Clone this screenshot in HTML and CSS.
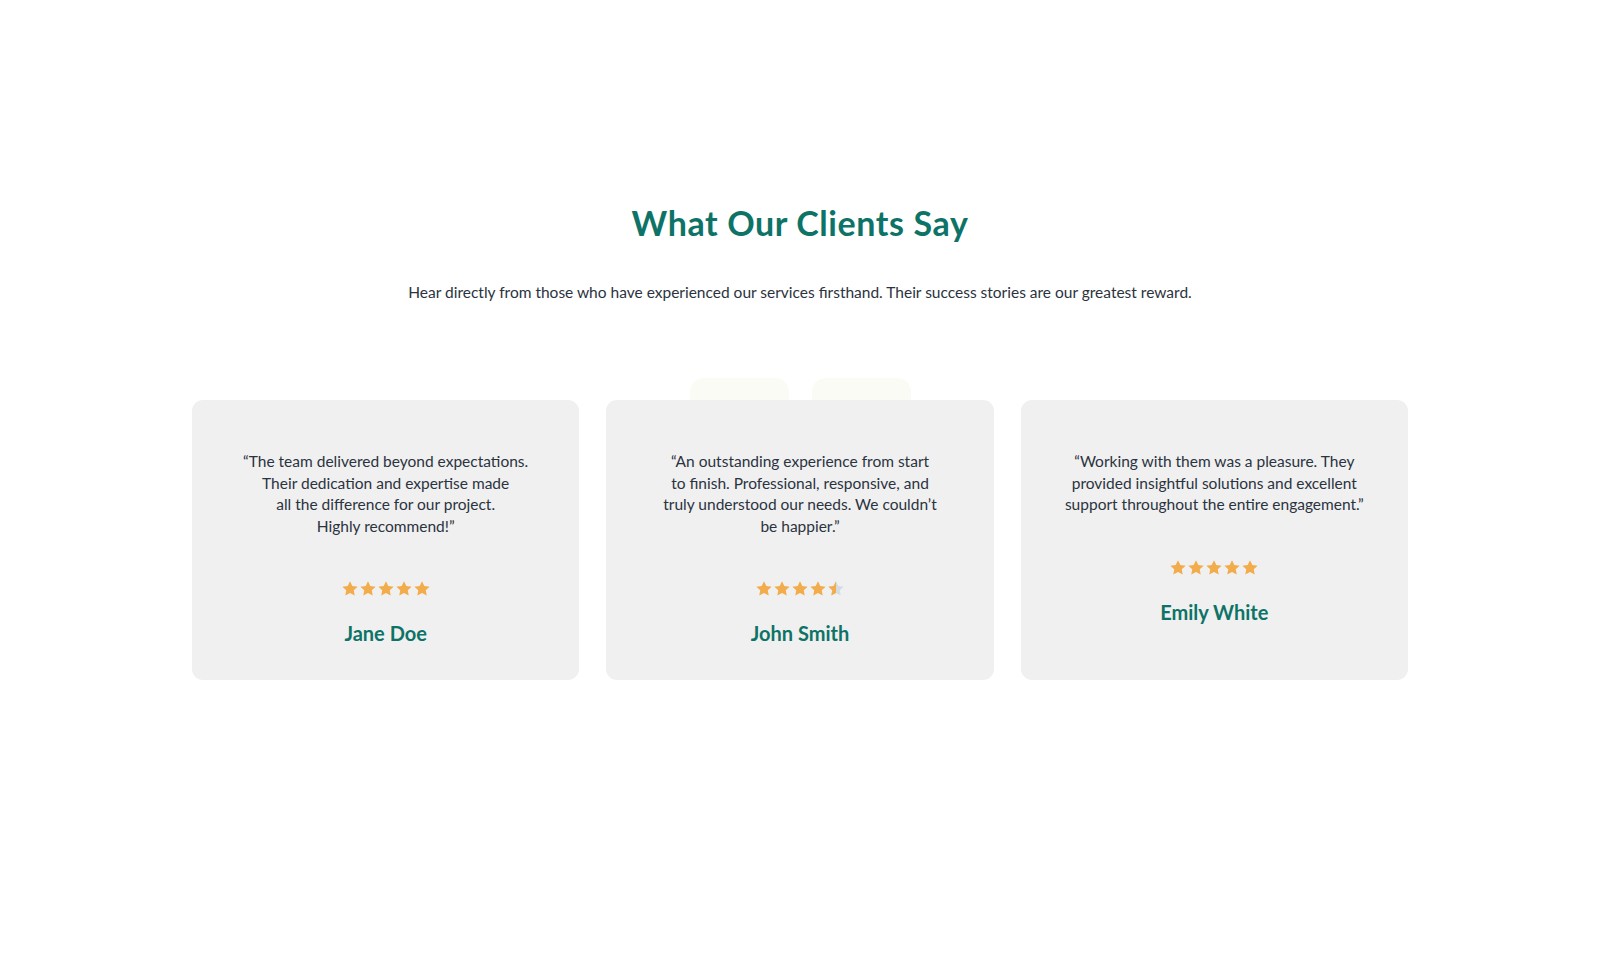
FILE: index.html
```html
<!DOCTYPE html>
<html lang="en">
<head>
    <meta charset="UTF-8">
    <title>Testimonials</title>
    <link rel="stylesheet" href="styles.css">
</head>
<body>
    <section class="testimonials">
        <h2 class="title">What Our Clients Say</h2>
        <p class="lead">Hear directly from those who have experienced our services firsthand. Their success stories are our greatest reward.</p>

        <div class="tabs">
            <span class="tab"></span>
            <span class="tab"></span>
        </div>

        <div class="cards">
            <div class="card">
                <p class="quote">“The team delivered beyond expectations.<br>Their dedication and expertise made<br>all the difference for our project.<br>Highly recommend!”</p>
                <div class="stars">
                    <svg viewBox="0 0 24 24"><path class="on" d="M12 1.5l3.1 6.5 7.1.9-5.2 4.9 1.3 7L12 17.4l-6.3 3.4 1.3-7L1.8 8.9l7.1-.9z"/></svg>
                    <svg viewBox="0 0 24 24"><path class="on" d="M12 1.5l3.1 6.5 7.1.9-5.2 4.9 1.3 7L12 17.4l-6.3 3.4 1.3-7L1.8 8.9l7.1-.9z"/></svg>
                    <svg viewBox="0 0 24 24"><path class="on" d="M12 1.5l3.1 6.5 7.1.9-5.2 4.9 1.3 7L12 17.4l-6.3 3.4 1.3-7L1.8 8.9l7.1-.9z"/></svg>
                    <svg viewBox="0 0 24 24"><path class="on" d="M12 1.5l3.1 6.5 7.1.9-5.2 4.9 1.3 7L12 17.4l-6.3 3.4 1.3-7L1.8 8.9l7.1-.9z"/></svg>
                    <svg viewBox="0 0 24 24"><path class="on" d="M12 1.5l3.1 6.5 7.1.9-5.2 4.9 1.3 7L12 17.4l-6.3 3.4 1.3-7L1.8 8.9l7.1-.9z"/></svg>
                </div>
                <h3 class="name">Jane Doe</h3>
            </div>

            <div class="card">
                <p class="quote">“An outstanding experience from start<br>to finish. Professional, responsive, and<br>truly understood our needs. We couldn’t<br>be happier.”</p>
                <div class="stars">
                    <svg viewBox="0 0 24 24"><path class="on" d="M12 1.5l3.1 6.5 7.1.9-5.2 4.9 1.3 7L12 17.4l-6.3 3.4 1.3-7L1.8 8.9l7.1-.9z"/></svg>
                    <svg viewBox="0 0 24 24"><path class="on" d="M12 1.5l3.1 6.5 7.1.9-5.2 4.9 1.3 7L12 17.4l-6.3 3.4 1.3-7L1.8 8.9l7.1-.9z"/></svg>
                    <svg viewBox="0 0 24 24"><path class="on" d="M12 1.5l3.1 6.5 7.1.9-5.2 4.9 1.3 7L12 17.4l-6.3 3.4 1.3-7L1.8 8.9l7.1-.9z"/></svg>
                    <svg viewBox="0 0 24 24"><path class="on" d="M12 1.5l3.1 6.5 7.1.9-5.2 4.9 1.3 7L12 17.4l-6.3 3.4 1.3-7L1.8 8.9l7.1-.9z"/></svg>
                    <svg viewBox="0 0 24 24">
                        <path class="off" d="M12 1.5l3.1 6.5 7.1.9-5.2 4.9 1.3 7L12 17.4l-6.3 3.4 1.3-7L1.8 8.9l7.1-.9z"/>
                        <path class="on" d="M12 1.5V17.4l-6.3 3.4 1.3-7L1.8 8.9l7.1-.9z"/>
                    </svg>
                </div>
                <h3 class="name">John Smith</h3>
            </div>

            <div class="card">
                <p class="quote">“Working with them was a pleasure. They<br>provided insightful solutions and excellent<br>support throughout the entire engagement.”</p>
                <div class="stars">
                    <svg viewBox="0 0 24 24"><path class="on" d="M12 1.5l3.1 6.5 7.1.9-5.2 4.9 1.3 7L12 17.4l-6.3 3.4 1.3-7L1.8 8.9l7.1-.9z"/></svg>
                    <svg viewBox="0 0 24 24"><path class="on" d="M12 1.5l3.1 6.5 7.1.9-5.2 4.9 1.3 7L12 17.4l-6.3 3.4 1.3-7L1.8 8.9l7.1-.9z"/></svg>
                    <svg viewBox="0 0 24 24"><path class="on" d="M12 1.5l3.1 6.5 7.1.9-5.2 4.9 1.3 7L12 17.4l-6.3 3.4 1.3-7L1.8 8.9l7.1-.9z"/></svg>
                    <svg viewBox="0 0 24 24"><path class="on" d="M12 1.5l3.1 6.5 7.1.9-5.2 4.9 1.3 7L12 17.4l-6.3 3.4 1.3-7L1.8 8.9l7.1-.9z"/></svg>
                    <svg viewBox="0 0 24 24"><path class="on" d="M12 1.5l3.1 6.5 7.1.9-5.2 4.9 1.3 7L12 17.4l-6.3 3.4 1.3-7L1.8 8.9l7.1-.9z"/></svg>
                </div>
                <h3 class="name">Emily White</h3>
            </div>
        </div>
    </section>
</body>
</html>
```

FILE: styles.css
```css
* {
    box-sizing: border-box;
}
body {
    margin: 0;
    background: #fff;
    font-family: "Lato", "Noto Sans", sans-serif;
    color: #2b3340;
}
.testimonials {
    max-width: 1216px;
    margin: 0 auto;
    padding-top: 202px;
    text-align: center;
}
.title {
    margin: 0;
    font-size: 34px;
    line-height: 42px;
    font-weight: 700;
    letter-spacing: 0.6px;
    color: #0e7367;
}
.lead {
    margin: 36px 0 0;
    font-size: 15.5px;
    line-height: 24px;
}
.tabs {
    display: flex;
    justify-content: center;
    gap: 23px;
    margin-top: 74px;
    height: 22px;
}
.tab {
    width: 99px;
    height: 40px;
    border-radius: 14px;
    background: #fbfbf5;
}
.cards {
    position: relative;
    display: grid;
    grid-template-columns: repeat(3, 1fr);
    gap: 27px;
}
.card {
    background: #f0f0f0;
    border-radius: 11px;
    padding: 51px 20px 30px;
    min-height: 280px;
}
.quote {
    margin: 0;
    font-size: 15.5px;
    line-height: 21.6px;
    white-space: nowrap;
}
.stars {
    display: flex;
    justify-content: center;
    margin-top: 43px;
}
.stars svg {
    width: 18px;
    height: 18px;
}
.stars .on {
    fill: #f2ac4b;
}
.stars .off {
    fill: #d3dbe3;
}
.name {
    margin: 21px 0 0;
    font-size: 20px;
    line-height: 28px;
    font-weight: 700;
    color: #0e7367;
}
```
